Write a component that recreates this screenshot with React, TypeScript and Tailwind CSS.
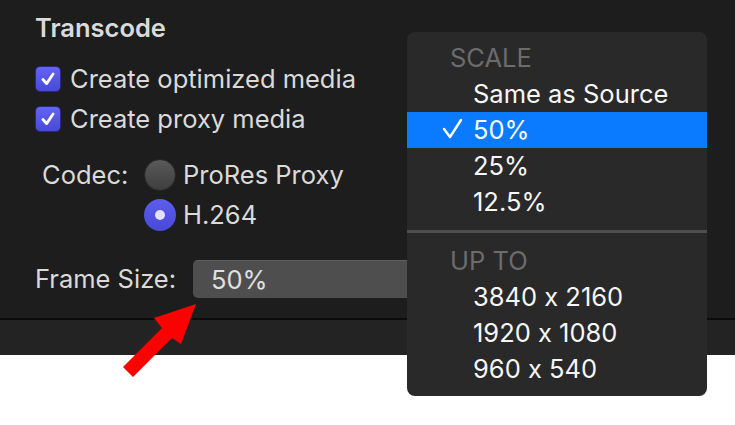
import React from 'react'

const scaleItems = ['Same as Source', '50%', '25%', '12.5%']
const sizeItems = ['3840 x 2160', '1920 x 1080', '960 x 540']

const Checkbox = () => (
  <div className="w-[26px] h-[26px] rounded-[5px] border border-[#2a2a80] bg-gradient-to-b from-[#6464f2] to-[#4848da] flex items-center justify-center">
    <svg width="26" height="26" viewBox="0 0 26 26" fill="none">
      <path d="M7.5 13.5 L11.5 18 L18.5 7.5" stroke="white" strokeWidth="3" strokeLinecap="round" strokeLinejoin="round" />
    </svg>
  </div>
)

const Radio = ({ on }: { on?: boolean }) =>
  on ? (
    <div className="w-[32px] h-[32px] rounded-full bg-gradient-to-b from-[#5c5cee] to-[#4a4ad8] flex items-center justify-center">
      <div className="w-[10px] h-[10px] rounded-full bg-[#e2e2ff]" />
    </div>
  ) : (
    <div className="w-[32px] h-[32px] rounded-full border border-[#2a2a2a] bg-gradient-to-b from-[#5a5a5a] to-[#3e3e3e]" />
  )

const Menu = () => (
  <div className="absolute left-[407px] top-[32px] w-[300px] h-[364px] rounded-[8px] bg-[#292929] pt-[8px] text-[25.5px] text-[#f7f7f7]">
    <div className="h-[36px] leading-[36px] pl-[43px] text-[#6c6c6c]">SCALE</div>
    {scaleItems.map((s) => (
      <div
        key={s}
        className={`h-[36px] leading-[36px] pl-[66px] relative ${s === '50%' ? 'bg-[#0a7aff] text-white' : ''}`}
      >
        {s === '50%' && (
          <svg className="absolute left-[35px] top-[6px]" width="22" height="22" viewBox="0 0 22 22" fill="none">
            <path d="M2 11 L8 19 L19 2" stroke="white" strokeWidth="2.4" strokeLinecap="round" strokeLinejoin="round" />
          </svg>
        )}
        {s}
      </div>
    ))}
    <div className="mt-[10px] h-[3px] bg-[#4e4e4e]" />
    <div className="mt-[10px] h-[36px] leading-[36px] pl-[43px] text-[#6c6c6c]">UP TO</div>
    {sizeItems.map((s) => (
      <div key={s} className="h-[36px] leading-[36px] pl-[66px]">
        {s}
      </div>
    ))}
  </div>
)

export default function App() {
  return (
    <div className="relative w-[735px] h-[425px] overflow-hidden bg-white font-['Inter','Liberation_Sans',sans-serif] [font-feature-settings:'calt'_0]">
      <div className="h-[318px] bg-[#1d1d1d] pt-[8px] pl-[35px] text-[25.5px] text-[#dadada]">
        <div className="h-[40px] leading-[40px] text-[25.5px] font-semibold">Transcode</div>
        <div className="mt-[11px] flex flex-col">
          <div className="h-[40px] flex items-center gap-[9px]">
            <Checkbox />
            <span className="leading-[40px]">Create optimized media</span>
          </div>
          <div className="h-[40px] flex items-center gap-[9px]">
            <Checkbox />
            <span className="leading-[40px]">Create proxy media</span>
          </div>
        </div>
        <div className="mt-[16px] flex pl-[7px]">
          <div className="w-[102px] h-[40px] leading-[40px]">Codec:</div>
          <div className="flex flex-col">
            <div className="h-[40px] flex items-center gap-[7px]">
              <Radio />
              <span className="leading-[40px]">ProRes Proxy</span>
            </div>
            <div className="h-[40px] flex items-center gap-[7px]">
              <Radio on />
              <span className="leading-[40px]">H.264</span>
            </div>
          </div>
        </div>
        <div className="mt-[25px] flex items-center">
          <div className="w-[158px] leading-[38px]">Frame Size:</div>
          <div className="w-[240px] h-[38px] rounded-[5px] bg-[#4e4e4e] border-t border-[#5c5c5c] pl-[18px] leading-[37px] text-[#e0e0e0]">
            50%
          </div>
        </div>
      </div>
      <div className="h-[2px] bg-[#0b0b0b]" />
      <div className="h-[35px] bg-[#232323]" />
      <Menu />
      <svg className="absolute left-0 top-0" width="735" height="425" viewBox="0 0 735 425">
        <polygon points="123,367 162,328 154,318 196,304 181,344 172,338 133,377" fill="#ff0000" />
      </svg>
    </div>
  )
}
